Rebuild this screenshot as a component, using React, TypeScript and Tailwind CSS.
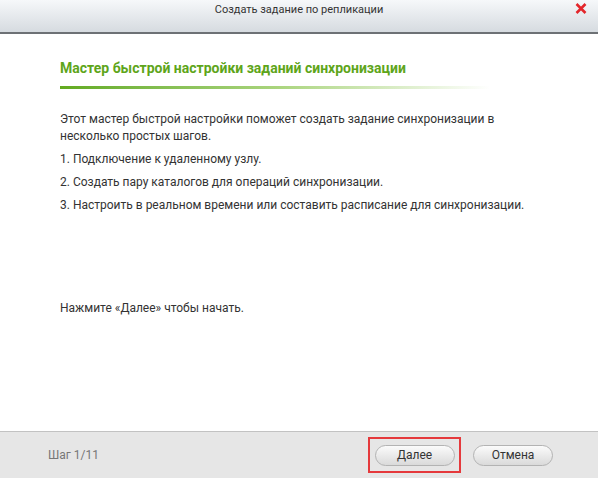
import React from 'react';

const steps = [
    '1. Подключение к удаленному узлу.',
    '2. Создать пару каталогов для операций синхронизации.',
    '3. Настроить в реальном времени или составить расписание для синхронизации.',
];

const CloseIcon = () => (
    <svg width="12" height="11" viewBox="0 0 12 11">
        <path d="M1.5 1 L10.5 10 M10.5 1 L1.5 10" stroke="#e3262b" strokeWidth="2.6" strokeLinecap="butt" />
    </svg>
);

export default function App() {
    return (
        <div className="w-[598px] h-[478px] flex flex-col bg-white text-[#333] font-['Roboto','Liberation_Sans',sans-serif]">
            {/* title bar */}
            <div className="h-[34px] shrink-0 relative flex justify-center pt-[2px] border-b-2 border-[#6d7175] bg-gradient-to-b from-[#f6f8fa] to-[#d6dbe0]">
                <span className="text-[11px] leading-[16px] text-[#333]">Создать задание по репликации</span>
                <button className="absolute right-[10px] top-[2px] p-[1px]" title="Закрыть">
                    <CloseIcon />
                </button>
            </div>

            {/* content */}
            <div className="flex-1 pl-[60px] pr-[30px] pt-[24px]">
                <h2 className="text-[14px] leading-[20px] font-bold text-[#5ea51a]">
                    Мастер быстрой настройки заданий синхронизации
                </h2>
                <div className="mt-[8px] w-[430px] h-[3px] bg-gradient-to-r from-[#62aa1e] via-[#a9d47c] to-transparent" />

                <div className="mt-[22px] text-[12px] leading-[17px] text-[#333]">
                    <p className="w-[448px]">
                        Этот мастер быстрой настройки поможет создать задание синхронизации в несколько простых шагов.
                    </p>
                    {steps.map(step => (
                        <p key={step} className="mt-[6px]">{step}</p>
                    ))}
                    <p className="mt-[86px]">Нажмите «Далее» чтобы начать.</p>
                </div>
            </div>

            {/* footer */}
            <div className="h-[47px] shrink-0 flex items-center border-t border-[#c2c2c2] bg-[#e6e6e6] pl-[48px] pr-[45px]">
                <span className="text-[12px] text-[#777]">Шаг 1/11</span>
                <div className="ml-auto w-[93px] h-[36px] flex items-center justify-center border-2 border-[#e5393c]">
                    <button className="w-[80px] h-[21px] rounded-full border border-[#b3b3b3] bg-gradient-to-b from-[#fbfbfb] to-[#dadada] text-[12px] leading-[19px] text-[#333]">
                        Далее
                    </button>
                </div>
                <button className="ml-[12px] w-[80px] h-[21px] rounded-full border border-[#b3b3b3] bg-gradient-to-b from-[#fbfbfb] to-[#dadada] text-[12px] leading-[19px] text-[#333]">
                    Отмена
                </button>
            </div>
        </div>
    );
}
